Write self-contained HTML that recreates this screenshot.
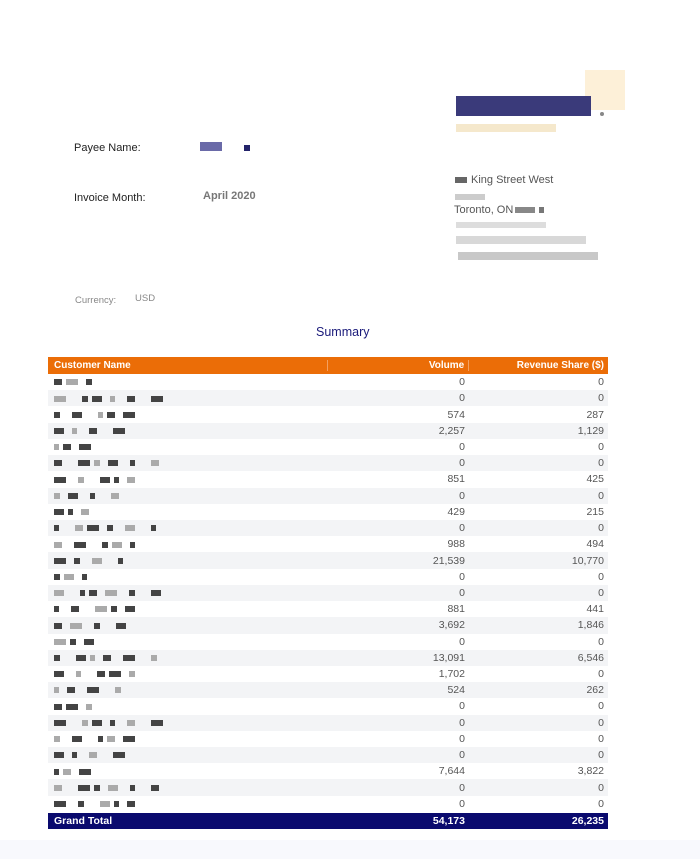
<!DOCTYPE html>
<html><head><meta charset="utf-8"><style>
body{margin:0;width:700px;height:859px;background:#fff;font-family:"Liberation Sans",sans-serif;position:relative;overflow:hidden}
.a{position:absolute;white-space:nowrap}
.b{display:inline-block;height:6px;background:#444;margin-right:4px;vertical-align:middle}
.g{background:#aaa}
#t{position:absolute;left:48px;top:357px;width:560px}
.r{display:flex;height:16.22px;font-size:10.5px;color:#555;align-items:center}
.r:nth-child(even){background:#f3f4f6}
.c1{width:275px;padding-left:6px}
.c2{width:139px;text-align:right;padding-right:4px}
.c3{width:136px;text-align:right;padding-right:4px}
.h{height:17px;background:#eb6d07;color:#fff;font-weight:bold;font-size:10px;display:flex;align-items:center}
.h .c2{border-left:1px solid #f3a060}.h .c3{border-left:1px solid #f3a060}
.tot{height:16px;background:#0a0a6e;color:#fff;font-weight:bold;font-size:10.5px;display:flex;align-items:center;margin-top:1px}
</style></head><body>
<div style="position:absolute;left:0;top:840px;width:700px;height:19px;background:#f8f9fd"></div>
<div class="a" style="left:585px;top:70px;width:40px;height:40px;background:#fdf0d8"></div>
<div class="a" style="left:456px;top:96px;width:135px;height:20px;background:#3a3a7a"></div>
<div class="a" style="left:600px;top:112px;width:4px;height:4px;background:#888;border-radius:2px"></div>
<div class="a" style="left:456px;top:124px;width:100px;height:8px;background:#f5e8cc"></div>
<div class="a" style="left:455px;top:174px;font-size:11px;color:#555"><span class="b" style="width:12px;background:#666"></span>King Street West</div>
<div class="a" style="left:455px;top:194px;width:30px;height:6px;background:#ccc"></div>
<div class="a" style="left:454px;top:204px;font-size:11px;color:#555">Toronto, ON<span class="b" style="width:20px;background:#888;margin-left:2px"></span><span class="b" style="width:5px;background:#777"></span></div>
<div class="a" style="left:456px;top:222px;width:90px;height:6px;background:#ddd"></div>
<div class="a" style="left:456px;top:236px;width:130px;height:8px;background:#d8d8d8"></div>
<div class="a" style="left:458px;top:252px;width:140px;height:8px;background:#c8c8c8"></div>
<div class="a" style="left:74px;top:142px;font-size:11px;color:#222">Payee Name:</div>
<div class="a" style="left:200px;top:142px;width:22px;height:9px;background:#6a6aa8"></div>
<div class="a" style="left:244px;top:145px;width:6px;height:6px;background:#23236a"></div>
<div class="a" style="left:74px;top:192px;font-size:11px;color:#222">Invoice Month:</div>
<div class="a" style="left:203px;top:190px;font-size:11px;color:#777;font-weight:bold">April 2020</div>
<div class="a" style="left:75px;top:295px;font-size:9.5px;color:#888">Currency:</div>
<div class="a" style="left:135px;top:293px;font-size:9.5px;color:#888">USD</div>
<div class="a" style="left:316px;top:325px;font-size:12.5px;color:#1a1a7a">Summary</div>
<div id="t">
<div class="h"><div class="c1">Customer Name</div><div class="c2" style="width:138px">Volume</div><div class="c3">Revenue Share ($)</div></div>
<div id="rows"></div>
<div class="tot"><div class="c1">Grand Total</div><div class="c2">54,173</div><div class="c3">26,235</div></div>
</div>
<script>
var d=[[0,0],[0,0],[574,287],["2,257","1,129"],[0,0],[0,0],[851,425],[0,0],[429,215],[0,0],[988,494],["21,539","10,770"],[0,0],[0,0],[881,441],["3,692","1,846"],[0,0],["13,091","6,546"],["1,702",0],[524,262],[0,0],[0,0],[0,0],[0,0],["7,644","3,822"],[0,0],[0,0]];
var h="";d.forEach(function(x,i){var n="";var k=3+(i*7)%4;for(var j=0;j<k;j++){var w=[8,12,6,10,5][(i+j)%5];n+='<span class="b'+((i+j)%3==1?' g':'')+'" style="width:'+w+'px;margin-right:'+(4+((i*3+j)%4)*4)+'px"></span>';}
h+='<div class="r"><div class="c1">'+n+'</div><div class="c2">'+x[0]+'</div><div class="c3">'+x[1]+'</div></div>';});
document.getElementById("rows").innerHTML=h;
</script>
</body></html>
